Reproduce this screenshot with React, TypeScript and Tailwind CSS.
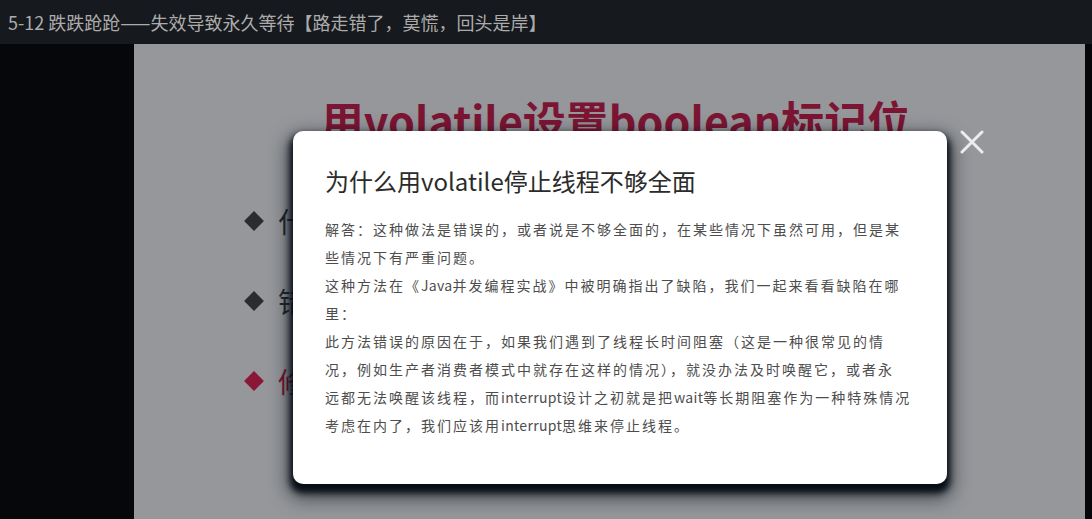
import React from 'react';

const cjk = { fontFamily: '"Noto Sans CJK SC", "Noto Sans", sans-serif' };

const bullets = [
  { text: '什么时候适用', color: 'text-[#25272b]', dot: 'bg-[#2a2c30]' },
  { text: '错误的停止方法', color: 'text-[#25272b]', dot: 'bg-[#2a2c30]' },
  { text: '修正方案', color: 'text-[#7c1533]', dot: 'bg-[#8a1736]' },
];

// latin words in the body keep normal spacing, only the CJK text is spaced out
function En({ children }: { children: React.ReactNode }) {
  return <span className="tracking-[0.3px]">{children}</span>;
}

function CloseIcon() {
  return (
    <svg width="24" height="24" viewBox="0 0 24 24" className="text-[#ececec]">
      <path d="M2 2 L22 22 M22 2 L2 22" stroke="currentColor" strokeWidth="3" strokeLinecap="round" />
    </svg>
  );
}

function Modal() {
  return (
    <div className="absolute left-[159px] top-[87px] w-[654px] h-[353px] bg-white rounded-[10px] px-8 pt-[36px] shadow-[0_6px_6px_3px_rgba(8,14,22,1),0_9px_18px_6px_rgba(8,14,22,0.55)]">
      <h2 className="text-[24px] leading-[28px] text-[#2b2b2b] mb-[20px]">为什么用volatile停止线程不够全面</h2>
      <p className="text-[14px] tracking-[2px] leading-[28px] text-[#4d4d4d] whitespace-nowrap">
        解答：这种做法是错误的，或者说是不够全面的，在某些情况下虽然可用，但是某
        <br />
        些情况下有严重问题。
        <br />
        这种方法在《<En>Java</En>并发编程实战》中被明确指出了缺陷，我们一起来看看缺陷在哪
        <br />
        里：
        <br />
        此方法错误的原因在于，如果我们遇到了线程长时间阻塞（这是一种很常见的情
        <br />
        况，例如生产者消费者模式中就存在这样的情况），就没办法及时唤醒它，或者永
        <br />
        远都无法唤醒该线程，而<En>interrupt</En>设计之初就是把<En>wait</En>等长期阻塞作为一种特殊情况
        <br />
        考虑在内了，我们应该用<En>interrupt</En>思维来停止线程。
      </p>
    </div>
  );
}

export default function App() {
  return (
    <div className="w-[1092px] h-[519px] flex flex-col overflow-hidden bg-[#05070b]" style={cjk}>
      {/* Lesson title bar */}
      <div className="h-[44px] shrink-0 bg-[#16191d] flex items-center px-2 text-[18px] text-[#acacac]">
        5-12 跌跌跄跄——失效导致永久等待【路走错了，莫慌，回头是岸】
      </div>

      <div className="flex flex-1 min-h-0">
        <div className="w-[134px] bg-[#05070b]" />

        {/* Slide with dimmed backdrop */}
        <div className="relative flex-1 bg-[#95979b] overflow-hidden">
          <div className="flex flex-col pt-[49px]">
            <h1 className="text-center pl-[12px] text-[43px] leading-[52px] font-bold text-[#7c1533]">
              用volatile设置boolean标记位
            </h1>
            <div className="flex flex-col gap-[50px] pl-[113px] pt-[61px]">
              {bullets.map((b) => (
                <div key={b.text} className={`flex items-center gap-[17px] text-[28px] leading-[30px] ${b.color}`}>
                  <span className={`w-[14px] h-[14px] rotate-45 ${b.dot}`} />
                  <span>{b.text}</span>
                </div>
              ))}
            </div>
          </div>

          <Modal />

          <button className="absolute left-[826px] top-[86px] w-6 h-6">
            <CloseIcon />
          </button>
        </div>

        <div className="w-[7px] bg-[#05070b]" />
      </div>
    </div>
  );
}
